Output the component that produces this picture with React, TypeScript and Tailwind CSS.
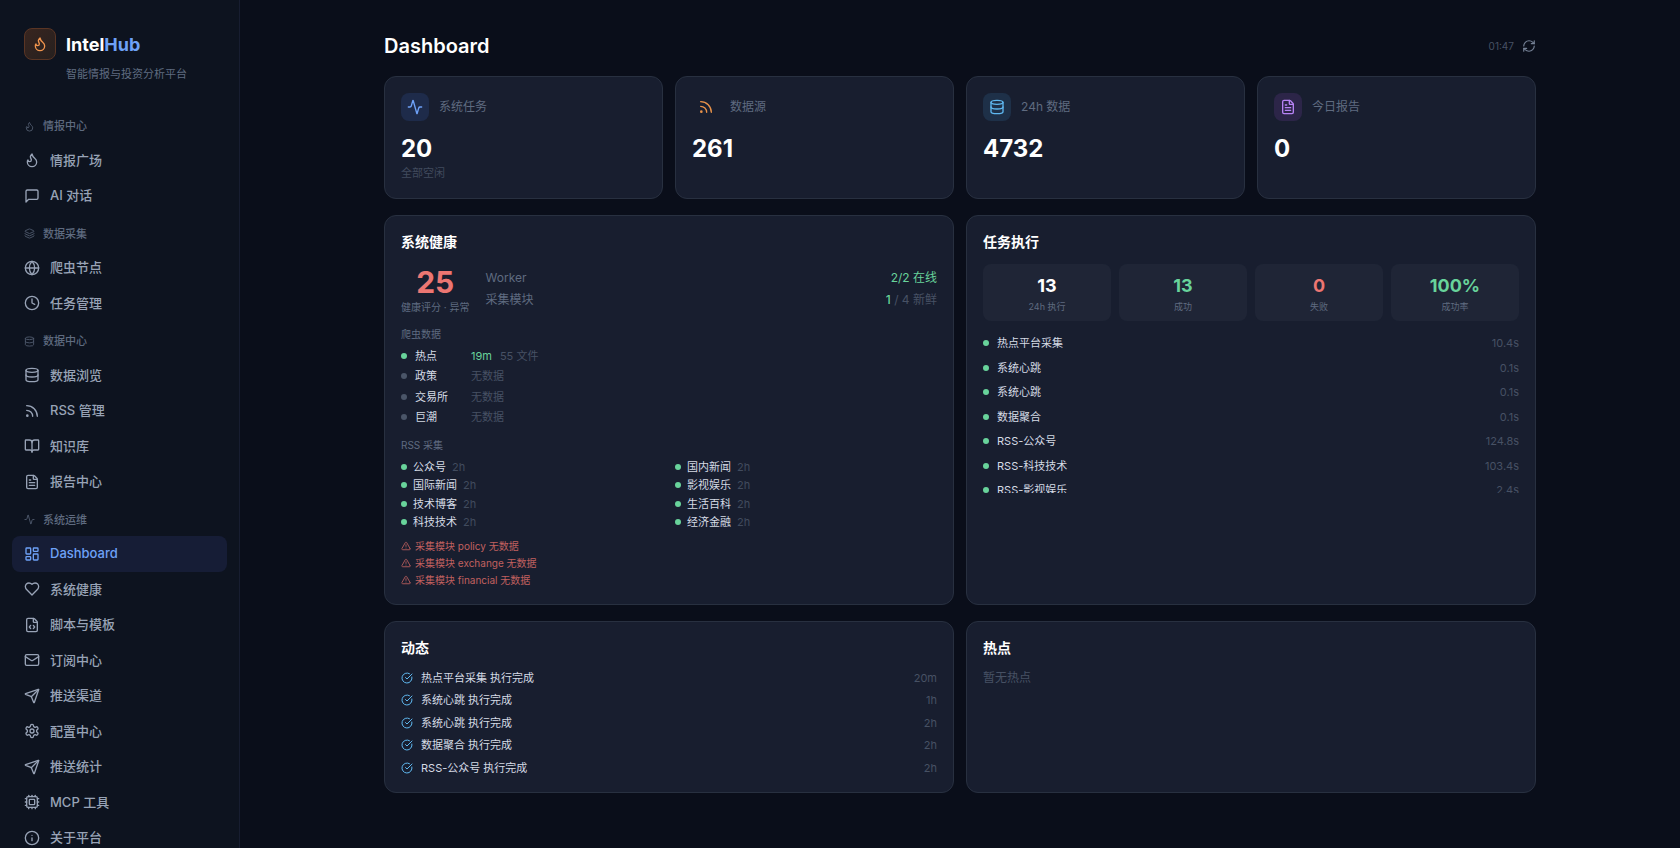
import type { ComponentType, ReactNode } from "react";
import {
  Activity,
  BookOpen,
  CircleCheckBig,
  Clock,
  Cpu,
  Database,
  FileCode,
  FileText,
  Globe,
  Info,
  Layers,
  LayoutDashboard,
  Mail,
  RefreshCw,
  Rss,
  Send,
  TriangleAlert,
} from "lucide-react";

type IconProps = { size?: number | string; className?: string };
type Icon = ComponentType<IconProps>;

function Stroke({ size = 16, className, children }: IconProps & { children: ReactNode }) {
  return (
    <svg
      width={size}
      height={size}
      viewBox="0 0 24 24"
      fill="none"
      stroke="currentColor"
      strokeWidth={2}
      strokeLinecap="round"
      strokeLinejoin="round"
      className={className}
      aria-hidden="true"
    >
      {children}
    </svg>
  );
}

const Flame: Icon = (props) => (
  <Stroke {...props}>
    <path d="M8.5 14.5A2.5 2.5 0 0 0 11 12c0-1.38-.5-2-1-3-1.072-2.143-.224-4.054 2-6 .5 2.5 2 4.9 4 6.5 2 1.6 3 3.5 3 5.5a7 7 0 1 1-14 0c0-1.153.433-2.294 1-3a2.5 2.5 0 0 0 2.5 2.5z" />
  </Stroke>
);

const Message: Icon = (props) => (
  <Stroke {...props}>
    <path d="M21 15a2 2 0 0 1-2 2H7l-4 4V5a2 2 0 0 1 2-2h14a2 2 0 0 1 2 2z" />
  </Stroke>
);

const Heart: Icon = (props) => (
  <Stroke {...props}>
    <path d="M19 14c1.49-1.46 3-3.21 3-5.5A5.5 5.5 0 0 0 16.5 3c-1.76 0-3 .5-4.5 2-1.5-1.5-2.74-2-4.5-2A5.5 5.5 0 0 0 2 8.5c0 2.3 1.5 4.05 3 5.5l7 7Z" />
  </Stroke>
);

const Gear: Icon = (props) => (
  <Stroke {...props}>
    <path d="M12.22 2h-.44a2 2 0 0 0-2 2v.18a2 2 0 0 1-1 1.73l-.43.25a2 2 0 0 1-2 0l-.15-.08a2 2 0 0 0-2.73.73l-.22.38a2 2 0 0 0 .73 2.73l.15.1a2 2 0 0 1 1 1.72v.51a2 2 0 0 1-1 1.74l-.15.09a2 2 0 0 0-.73 2.73l.22.38a2 2 0 0 0 2.73.73l.15-.08a2 2 0 0 1 2 0l.43.25a2 2 0 0 1 1 1.73V20a2 2 0 0 0 2 2h.44a2 2 0 0 0 2-2v-.18a2 2 0 0 1 1-1.73l.43-.25a2 2 0 0 1 2 0l.15.08a2 2 0 0 0 2.73-.73l.22-.39a2 2 0 0 0-.73-2.73l-.15-.08a2 2 0 0 1-1-1.74v-.5a2 2 0 0 1 1-1.74l.15-.09a2 2 0 0 0 .73-2.73l-.22-.38a2 2 0 0 0-2.73-.73l-.15.08a2 2 0 0 1-2 0l-.43-.25a2 2 0 0 1-1-1.73V4a2 2 0 0 0-2-2z" />
    <circle cx="12" cy="12" r="3" />
  </Stroke>
);

type NavSection = { title: string; icon: Icon; items: { label: string; icon: Icon }[] };

const sections: NavSection[] = [
  {
    title: "情报中心",
    icon: Flame,
    items: [
      { label: "情报广场", icon: Flame },
      { label: "AI 对话", icon: Message },
    ],
  },
  {
    title: "数据采集",
    icon: Layers,
    items: [
      { label: "爬虫节点", icon: Globe },
      { label: "任务管理", icon: Clock },
    ],
  },
  {
    title: "数据中心",
    icon: Database,
    items: [
      { label: "数据浏览", icon: Database },
      { label: "RSS 管理", icon: Rss },
      { label: "知识库", icon: BookOpen },
      { label: "报告中心", icon: FileText },
    ],
  },
  {
    title: "系统运维",
    icon: Activity,
    items: [
      { label: "Dashboard", icon: LayoutDashboard },
      { label: "系统健康", icon: Heart },
      { label: "脚本与模板", icon: FileCode },
      { label: "订阅中心", icon: Mail },
      { label: "推送渠道", icon: Send },
      { label: "配置中心", icon: Gear },
      { label: "推送统计", icon: Send },
      { label: "MCP 工具", icon: Cpu },
      { label: "关于平台", icon: Info },
    ],
  },
];

const stats: { label: string; value: string; note: string; icon: Icon; tone: string }[] = [
  { label: "系统任务", value: "20", note: "全部空闲", icon: Activity, tone: "bg-[#1e2b4a] text-[#6ea1f7]" },
  { label: "数据源", value: "261", note: "", icon: Rss, tone: "text-[#e8924a]" },
  { label: "24h 数据", value: "4732", note: "", icon: Database, tone: "bg-[#1e3048] text-[#5fb8f0]" },
  { label: "今日报告", value: "0", note: "", icon: FileText, tone: "bg-[#2c2548] text-[#b783f5]" },
];

const crawlers = [
  { name: "热点", age: "19m", detail: "55 文件" },
  { name: "政策", age: "", detail: "无数据" },
  { name: "交易所", age: "", detail: "无数据" },
  { name: "巨潮", age: "", detail: "无数据" },
];

const feeds = ["公众号", "国内新闻", "国际新闻", "影视娱乐", "技术博客", "生活百科", "科技技术", "经济金融"];

const warnings = ["采集模块 policy 无数据", "采集模块 exchange 无数据", "采集模块 financial 无数据"];

const totals = [
  { label: "24h 执行", value: "13", tone: "text-white" },
  { label: "成功", value: "13", tone: "text-[#68d39b]" },
  { label: "失败", value: "0", tone: "text-[#ec7672]" },
  { label: "成功率", value: "100%", tone: "text-[#68d39b]" },
];

const runs = [
  ["热点平台采集", "10.4s"],
  ["系统心跳", "0.1s"],
  ["系统心跳", "0.1s"],
  ["数据聚合", "0.1s"],
  ["RSS-公众号", "124.8s"],
  ["RSS-科技技术", "103.4s"],
  ["RSS-影视娱乐", "2.4s"],
];

const events = [
  ["热点平台采集 执行完成", "20m"],
  ["系统心跳 执行完成", "1h"],
  ["系统心跳 执行完成", "2h"],
  ["数据聚合 执行完成", "2h"],
  ["RSS-公众号 执行完成", "2h"],
];

function Dot({ on = true }: { on?: boolean }) {
  return <span className={`size-1.5 shrink-0 rounded-full ${on ? "bg-[#68d39b]" : "bg-[#4a5568]"}`} />;
}

function Panel({ title, children }: { title: string; children: ReactNode }) {
  return (
    <section className="rounded-xl border border-[#283040] bg-[#181e2f] p-4">
      <h2 className="mb-3 text-sm leading-5 font-semibold text-white">{title}</h2>
      {children}
    </section>
  );
}

function Sidebar() {
  return (
    <aside className="w-60 shrink-0 overflow-hidden border-r border-[#171d30] bg-[#0d131f]">
      <div className="px-6 pt-7">
        <div className="flex items-center gap-2.5">
          <span className="flex size-8 items-center justify-center rounded-lg border border-[#5a3524] bg-linear-to-br from-[#38251f] to-[#26201f] text-[#f0944d]">
            <Flame size={16} />
          </span>
          <span className="text-lg leading-normal font-bold text-white">
            Intel<span className="text-[#6ea1f7]">Hub</span>
          </span>
        </div>
        <p className="mt-1.5 pl-[42px] text-[11px] leading-4 text-[#5f6b80]">智能情报与投资分析平台</p>
      </div>
      <nav className="mt-6 px-3">
        {sections.map((section) => (
          <div key={section.title} className="pt-3">
            <h3 className="mb-2 flex items-center gap-2 px-3 text-[11px] leading-normal font-medium text-[#5f6b80]">
              <section.icon size={11} className="opacity-80" />
              {section.title}
            </h3>
            {section.items.map((item) => {
              const active = item.label === "Dashboard";
              return (
                <a
                  key={item.label}
                  href="#"
                  className={`flex items-center gap-2.5 rounded-lg px-3 py-2 text-[13px] leading-normal font-medium ${
                    active ? "bg-[#161d36] text-[#6ea1f7]" : "text-[#98a3b6]"
                  }`}
                >
                  <item.icon size={16} />
                  {item.label}
                </a>
              );
            })}
          </div>
        ))}
      </nav>
    </aside>
  );
}

function HealthPanel() {
  return (
    <Panel title="系统健康">
      <div className="flex items-center gap-4">
        <div className="text-center">
          <div className="text-3xl leading-9 font-bold text-[#ec7672]">25</div>
          <div className="text-[10px] leading-normal text-[#5f6b80]">健康评分 · 异常</div>
        </div>
        <dl className="flex flex-1 flex-col gap-1 text-xs leading-normal">
          <div className="flex justify-between">
            <dt className="text-[#5f6b80]">Worker</dt>
            <dd className="text-[#68d39b]">2/2 在线</dd>
          </div>
          <div className="flex justify-between">
            <dt className="text-[#5f6b80]">采集模块</dt>
            <dd className="text-[#475164]">
              <span className="font-medium text-[#68d39b]">1</span> / 4 新鲜
            </dd>
          </div>
        </dl>
      </div>
      <h3 className="mt-3 text-[10px] leading-normal text-[#5f6b80]">爬虫数据</h3>
      <ul className="mt-1.5 flex flex-col gap-1 text-[11px] leading-normal">
        {crawlers.map((c) => (
          <li key={c.name} className="flex items-center gap-2">
            <Dot on={c.age !== ""} />
            <span className="w-12 text-[#d5dbe5]">{c.name}</span>
            {c.age && <span className="text-[#68d39b]">{c.age}</span>}
            <span className="text-[#475164]">{c.detail}</span>
          </li>
        ))}
      </ul>
      <h3 className="mt-3 text-[10px] leading-normal text-[#5f6b80]">RSS 采集</h3>
      <ul className="mt-1.5 grid grid-cols-2 gap-x-3 gap-y-0.5 text-[11px] leading-normal">
        {feeds.map((f) => (
          <li key={f} className="flex items-center gap-1.5">
            <Dot />
            <span className="text-[#d5dbe5]">{f}</span>
            <span className="text-[#414b5e]">2h</span>
          </li>
        ))}
      </ul>
      <ul className="mt-2 flex flex-col gap-0.5 text-[10px] leading-normal text-[#c0605f]">
        {warnings.map((w) => (
          <li key={w} className="flex items-center gap-1">
            <TriangleAlert size={10} />
            {w}
          </li>
        ))}
      </ul>
    </Panel>
  );
}

export default function App() {
  return (
    <div className="flex h-screen overflow-hidden bg-[#0a0e1a] font-[Inter,'Noto_Sans_CJK_SC',sans-serif] antialiased">
      <Sidebar />
      <main className="min-w-0 flex-1 overflow-hidden px-6 py-8">
        <div className="mx-auto flex max-w-6xl flex-col gap-4">
          <header className="flex h-7 items-center justify-between">
            <h1 className="text-xl leading-7 font-semibold text-white">Dashboard</h1>
            <div className="flex items-center gap-2 text-[10px] leading-4 text-[#475164]">
              01:47
              <button type="button" aria-label="刷新" className="text-[#758195]">
                <RefreshCw size={14} />
              </button>
            </div>
          </header>

          <div className="grid grid-cols-4 gap-3">
            {stats.map((s) => (
              <section key={s.label} className="rounded-xl border border-[#283040] bg-[#181e2f] p-4">
                <div className="flex items-center gap-2.5">
                  <span className={`flex size-7 items-center justify-center rounded-lg ${s.tone}`}>
                    <s.icon size={16} />
                  </span>
                  <h2 className="text-xs leading-4 text-[#5f6b80]">{s.label}</h2>
                </div>
                <div className="mt-3 text-2xl leading-8 font-bold text-white">{s.value}</div>
                {s.note && <div className="text-[11px] leading-normal text-[#414b5e]">{s.note}</div>}
              </section>
            ))}
          </div>

          <div className="grid grid-cols-2 gap-3">
            <HealthPanel />
            <Panel title="任务执行">
              <div className="grid grid-cols-4 gap-2">
                {totals.map((t) => (
                  <div key={t.label} className="rounded-lg bg-[#1f2536] p-2 text-center">
                    <div className={`text-lg leading-7 font-bold ${t.tone}`}>{t.value}</div>
                    <div className="text-[9px] leading-normal text-[#5f6b80]">{t.label}</div>
                  </div>
                ))}
              </div>
              <ul className="mt-3 flex max-h-40 flex-col gap-1 overflow-hidden text-[11px] leading-normal">
                {runs.map(([name, time], i) => (
                  <li key={i} className="flex shrink-0 items-center gap-2 py-0.5">
                    <Dot />
                    <span className="flex-1 text-[#d5dbe5]">{name}</span>
                    <span className="text-[#475164]">{time}</span>
                  </li>
                ))}
              </ul>
            </Panel>
          </div>

          <div className="grid grid-cols-2 gap-3">
            <Panel title="动态">
              <ul className="flex flex-col gap-1.5 text-[11px] leading-normal">
                {events.map(([name, time], i) => (
                  <li key={i} className="flex items-center gap-2">
                    <CircleCheckBig size={12} className="text-[#5fb8f0]" />
                    <span className="flex-1 text-[#d5dbe5]">{name}</span>
                    <span className="text-[#475164]">{time}</span>
                  </li>
                ))}
              </ul>
            </Panel>
            <Panel title="热点">
              <p className="text-xs leading-4 text-[#475164]">暂无热点</p>
            </Panel>
          </div>
        </div>
      </main>
    </div>
  );
}
